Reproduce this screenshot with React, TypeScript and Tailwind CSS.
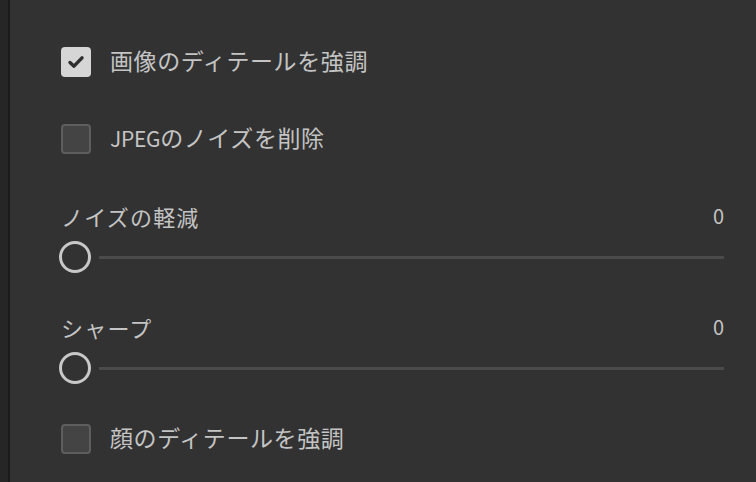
import React from "react";

function Checkbox({ checked, children }: { checked?: boolean; children: React.ReactNode }) {
  return (
    <div className="flex items-center h-[30px]">
      {checked ? (
        <div className="w-[30px] h-[30px] rounded-[4px] bg-[#d6d6d6] flex items-center justify-center">
          <svg width="20" height="20" viewBox="0 0 20 20" fill="none">
            <path d="M4 10.5 L8 14.2 L16 5.8" stroke="#2e2e2e" strokeWidth="3.4" strokeLinecap="round" strokeLinejoin="round" />
          </svg>
        </div>
      ) : (
        <div className="w-[30px] h-[30px] rounded-[4px] bg-[#444444] border-2 border-[#5e5e5e]" />
      )}
      <span className="ml-[19px] -mt-[4px] text-[23px] leading-none text-[#c4c4c4] tracking-[0.6px]">{children}</span>
    </div>
  );
}

function Slider({ label, value }: { label: string; value: number }) {
  return (
    <div>
      <div className="flex items-center justify-between h-[24px]">
        <span className="text-[22px] leading-none text-[#c4c4c4] tracking-[1.2px]">{label}</span>
        <span className="text-[20px] leading-none text-[#c4c4c4]">{value}</span>
      </div>
      <div className="flex items-center mt-[13px] h-[32px]">
        <div className="w-[32px] h-[32px] -ml-[2px] rounded-full border-[3.5px] border-[#c8c8c8]" />
        <div className="flex-1 ml-[8px] h-[3px] bg-[#4b4b4b]" />
      </div>
    </div>
  );
}

export default function App() {
  return (
    <div
      className="w-[756px] h-[482px] bg-[#323232] flex overflow-hidden"
      style={{ fontFamily: '"Noto Sans CJK JP", "Noto Sans", sans-serif' }}
    >
      <div className="w-[8px] bg-[#262626]" />
      <div className="w-[2px] bg-[#1b1b1b]" />
      <div className="flex-1 pl-[51px] pr-[32px] pt-[47px]">
        <Checkbox checked>画像のディテールを強調</Checkbox>
        <div className="mt-[47px]">
          <Checkbox>
            <span className="text-[21px] tracking-[-0.3px]">JPEG</span>のノイズを削除
          </Checkbox>
        </div>
        <div className="mt-[50px]">
          <Slider label="ノイズの軽減" value={0} />
        </div>
        <div className="mt-[42px]">
          <Slider label="シャープ" value={0} />
        </div>
        <div className="mt-[40px]">
          <Checkbox>顔のディテールを強調</Checkbox>
        </div>
      </div>
    </div>
  );
}
